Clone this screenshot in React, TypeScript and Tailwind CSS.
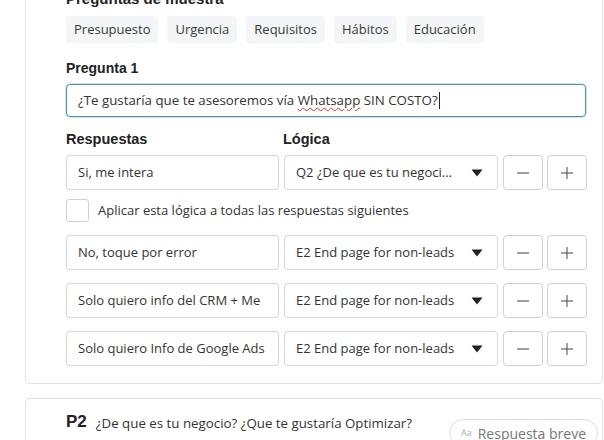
import React from "react";

const Caret = () => (
  <svg width="12" height="8" viewBox="0 0 12 8" className="shrink-0">
    <path d="M0.5 0.5 L11.5 0.5 L6 7.5 Z" fill="#222" />
  </svg>
);

const Minus = () => (
  <svg width="14" height="14" viewBox="0 0 14 14">
    <line x1="1" y1="7" x2="13" y2="7" stroke="#555" strokeWidth="1.1" />
  </svg>
);
const Plus = () => (
  <svg width="14" height="14" viewBox="0 0 14 14">
    <line x1="1" y1="7" x2="13" y2="7" stroke="#555" strokeWidth="1.1" />
    <line x1="7" y1="1" x2="7" y2="13" stroke="#555" strokeWidth="1.1" />
  </svg>
);

function Row({ answer, logic }: { answer: string; logic: string }) {
  return (
    <div className="flex h-[35px]">
      <div className="flex w-[213px] shrink-0 items-center overflow-hidden whitespace-nowrap rounded-[4px] border border-[#d6d6d6] bg-white px-[11px] text-[13px] text-[#333]">
        {answer}
      </div>
      <div className="ml-[5px] flex w-[214px] shrink-0 items-center justify-between rounded-[4px] border border-[#d6d6d6] bg-white pl-[11px] pr-[14px] text-[13px] text-[#333]">
        <span className="whitespace-nowrap">{logic}</span>
        <Caret />
      </div>
      <div className="ml-[5px] flex w-[40px] shrink-0 items-center justify-center rounded-[4px] border border-[#cfcfcf] bg-white">
        <Minus />
      </div>
      <div className="ml-[4px] flex w-[40px] shrink-0 items-center justify-center rounded-[4px] border border-[#cfcfcf] bg-white">
        <Plus />
      </div>
    </div>
  );
}

export default function App() {
  const chips = ["Presupuesto", "Urgencia", "Requisitos", "Hábitos", "Educación"];
  return (
    <div className="h-[440px] w-[604px] overflow-hidden bg-white font-['Open_Sans',sans-serif] text-[#333]">
      <div className="-mt-[32px] pl-[25px] pr-[1px]">
        <div className="rounded-[5px] border border-[#e1e1e1] pb-[17px] pl-[40px] pr-[15px] pt-[20px]">
          <div className="font-['Liberation_Sans',sans-serif] text-[15px] font-bold leading-[20px] text-[#222]">
            Preguntas de muestra
          </div>
          <div className="mt-[7px] flex gap-[9px]">
            {chips.map((c) => (
              <div
                key={c}
                className="flex h-[27px] items-center rounded-[4px] bg-[#f3f5f7] px-[8px] text-[13px] text-[#3a3a3a]"
              >
                {c}
              </div>
            ))}
          </div>
          <div className="mt-[15px] font-['Liberation_Sans',sans-serif] text-[14px] font-bold leading-[20px] text-[#222]">
            Pregunta 1
          </div>
          <div className="mt-[6px] flex h-[33px] w-[520px] items-center rounded-[4px] border border-[#4f93b3] bg-white px-[11px] text-[13.3px] text-[#333] shadow-[0_0_0_1px_rgba(79,147,179,0.25)]">
            <span className="whitespace-nowrap">
              ¿Te gustaría que te asesoremos vía{" "}
              <span className="underline decoration-wavy decoration-[#d33] decoration-1 underline-offset-2">
                Whatsapp
              </span>{" "}
              SIN COSTO?
            </span>
            <span className="ml-[1px] inline-block h-[17px] w-[1px] bg-[#222]" />
          </div>
          <div className="mt-[12px] flex font-['Liberation_Sans',sans-serif] text-[14.5px] font-bold leading-[20px] text-[#222]">
            <div className="w-[217px]">Respuestas</div>
            <div>Lógica</div>
          </div>
          <div className="mt-[6px]">
            <Row answer="Si, me intera" logic="Q2 ¿De que es tu negoci..." />
          </div>
          <div className="mt-[9px] flex items-center gap-[9px]">
            <div className="h-[23px] w-[23px] rounded-[3px] border border-[#d0d0d0] bg-white" />
            <span className="text-[13px] text-[#333]">
              Aplicar esta lógica a todas las respuestas siguientes
            </span>
          </div>
          <div className="mt-[13px] flex flex-col gap-[13px]">
            <Row answer="No, toque por error" logic="E2 End page for non-leads" />
            <Row answer="Solo quiero info del CRM + Me" logic="E2 End page for non-leads" />
            <Row answer="Solo quiero Info de Google Ads" logic="E2 End page for non-leads" />
          </div>
        </div>
        <div className="mt-[14px] flex h-[80px] items-start justify-between rounded-[5px] border border-[#e1e1e1] pl-[40px] pr-[4px] pt-[12px]">
          <div className="flex items-start gap-[9px]">
            <span className="font-['Liberation_Sans',sans-serif] text-[17px] font-bold leading-[22px] text-[#222]">
              P2
            </span>
            <div className="pt-[1px] text-[13.3px] leading-[23px] text-[#333]">
              <div>¿De que es tu negocio? ¿Que te gustaría Optimizar?</div>
              <div>Agencia, Clínica, Inmobiliaria</div>
            </div>
          </div>
          <div className="mt-[8px] flex h-[28px] items-center gap-[6px] rounded-full border border-[#dcdcdc] bg-white px-[11px] text-[14px] text-[#777]">
            <span className="text-[9px] text-[#aaa]">Aa</span>
            <span>Respuesta breve</span>
          </div>
        </div>
      </div>
    </div>
  );
}
